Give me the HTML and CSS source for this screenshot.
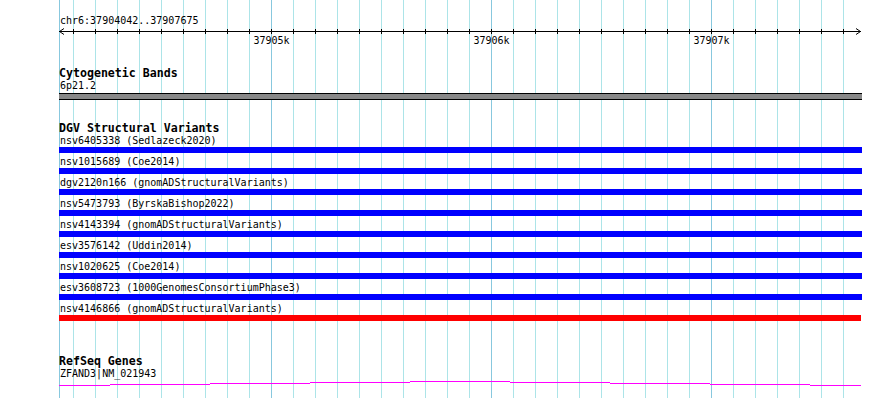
FILE: index.html
```html
<!DOCTYPE html>
<html lang="en">
<head>
    <meta charset="UTF-8">
    <title>chr6:37904042..37907675</title>
    <link rel="stylesheet" href="styles.css">
</head>
<body>
    <div class="view">
        <div class="ruler">
            <div class="locus">chr6:37904042..37907675</div>
            <svg class="scale" width="803" height="20" viewBox="0 0 803 20">
                <defs>
                    <pattern id="ticks" patternUnits="userSpaceOnUse" x="14" y="0" width="22" height="20">
                        <rect x="0" y="0" width="1" height="20" fill="#000"/>
                    </pattern>
                </defs>
                <rect x="14" y="3" width="771" height="5" fill="url(#ticks)"/>
                <path d="M0 5.5H802 M5 2.5L0.5 5.5L5 8.5 M797 2.5L801.5 5.5L797 8.5" stroke="#000" fill="none"/>
                <text x="212.5" y="18" class="tick-label">37905k</text>
                <text x="432.5" y="18" class="tick-label">37906k</text>
                <text x="652.5" y="18" class="tick-label">37907k</text>
            </svg>
        </div>

        <section class="track cyto">
            <h2 class="track-title">Cytogenetic Bands</h2>
            <div class="feature-label">6p21.2</div>
            <div class="band"></div>
        </section>

        <section class="track dgv">
            <h2 class="track-title">DGV Structural Variants</h2>
            <div class="feature"><div class="feature-label">nsv6405338 (Sedlazeck2020)</div><div class="bar"></div></div>
            <div class="feature"><div class="feature-label">nsv1015689 (Coe2014)</div><div class="bar"></div></div>
            <div class="feature"><div class="feature-label">dgv2120n166 (gnomADStructuralVariants)</div><div class="bar"></div></div>
            <div class="feature"><div class="feature-label">nsv5473793 (ByrskaBishop2022)</div><div class="bar"></div></div>
            <div class="feature"><div class="feature-label">nsv4143394 (gnomADStructuralVariants)</div><div class="bar"></div></div>
            <div class="feature"><div class="feature-label">esv3576142 (Uddin2014)</div><div class="bar"></div></div>
            <div class="feature"><div class="feature-label">nsv1020625 (Coe2014)</div><div class="bar"></div></div>
            <div class="feature"><div class="feature-label">esv3608723 (1000GenomesConsortiumPhase3)</div><div class="bar"></div></div>
            <div class="feature"><div class="feature-label">nsv4146866 (gnomADStructuralVariants)</div><div class="bar loss"></div></div>
        </section>

        <section class="track genes">
            <h2 class="track-title">RefSeq Genes</h2>
            <div class="feature-label">ZFAND3|NM_021943</div>
            <svg class="gene" width="803" height="8" viewBox="0 0 803 8">
                <path d="M0 5.5H51 M51 4.5H151 M151 3.5H251 M251 2.5H351 M351 1.5H451 M451 2.5H551 M551 3.5H651 M651 4.5H751 M751 5.5H802" stroke="#ff00ff" fill="none"/>
            </svg>
        </section>
    </div>
</body>
</html>
```

FILE: styles.css
```css
html, body {
    margin: 0;
    padding: 0;
    background: #fff;
    overflow: hidden;
}
body {
    font-family: "DejaVu Sans Mono", monospace;
    font-size: 10px;
    color: #000;
}
.view {
    margin-left: 59px;
    width: 803px;
    height: 398px;
    padding-top: 15px;
    box-sizing: border-box;
    /* grid: left edge + 1kb lines darker, 100bp lines light */
    background:
        linear-gradient(#88c8de, #88c8de) 0 0 / 1px 100% no-repeat,
        linear-gradient(#88c8de, #88c8de) 212px 0 / 1px 100% no-repeat,
        linear-gradient(#88c8de, #88c8de) 432px 0 / 1px 100% no-repeat,
        linear-gradient(#88c8de, #88c8de) 652px 0 / 1px 100% no-repeat,
        linear-gradient(to right, #ace4e8 0 1px, #fff 1px) 14px 0 / 22px 100% repeat-x;
}
.locus {
    line-height: 11px;
    height: 11px;
    padding-left: 1px;
}
.scale {
    display: block;
}
.tick-label {
    font-family: "DejaVu Sans Mono", monospace;
    font-size: 10px;
    text-anchor: middle;
}
.track-title {
    margin: 0;
    font-size: 11.6px;
    font-weight: bold;
    line-height: 13px;
}
.feature-label {
    line-height: 12px;
    height: 12px;
    padding-left: 1px;
    white-space: nowrap;
}
.cyto {
    margin-top: 21px;
}
.band {
    margin-top: 1px;
    height: 5px;
    background: #888;
    border-top: 1px solid #000;
    border-bottom: 1px solid #000;
}
.dgv {
    margin-top: 22px;
}
.feature {
    margin-bottom: 3px;
}
.bar {
    height: 6px;
    background: #0000ff;
}
.bar.loss {
    background: #ff0000;
    margin-right: 1px;
}
.genes {
    margin-top: 34px;
}
.gene {
    display: block;
}
```
